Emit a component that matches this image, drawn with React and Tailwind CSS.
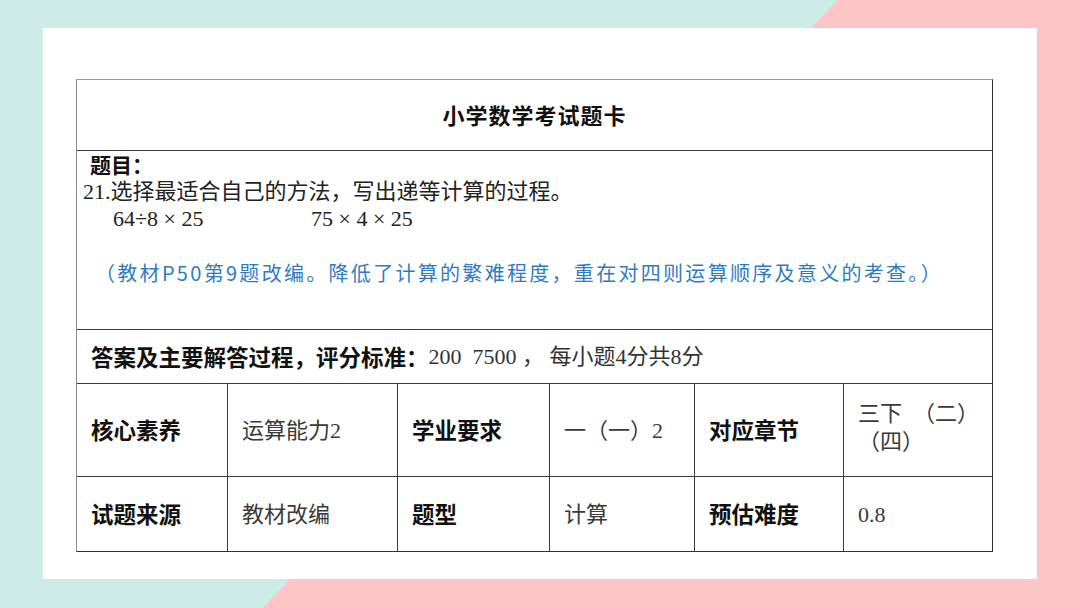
import React from "react";

const serif = "font-['Liberation_Serif','Noto_Sans_CJK_SC',serif]";
const sans = "font-['Noto_Sans_CJK_SC','Liberation_Sans',sans-serif]";

function Label({ children, last }) {
  return (
    <div
      className={`flex items-center pl-[14px] ${sans} font-bold text-[22.5px] text-[#111] ${
        last ? "" : "border-r border-[#3a3a3a]"
      }`}
    >
      {children}
    </div>
  );
}

function Value({ children, last }) {
  return (
    <div
      className={`flex items-center pl-[14px] whitespace-pre ${serif} text-[22px] text-[#3a3a3a] ${
        last ? "" : "border-r border-[#3a3a3a]"
      }`}
    >
      {children}
    </div>
  );
}

export default function App() {
  return (
    <div className="w-[1080px] h-[608px] overflow-hidden bg-[linear-gradient(133.4deg,#cdebe7_50.6%,#fdc6c6_50.6%)] pt-[28px] pl-[43px]">
      <div className="w-[994px] h-[551px] bg-white pt-[51px] pl-[33px]">
        <div className="w-[917px] h-[473px] flex flex-col border-t border-l border-t-[#9a9a9a] border-l-[#8a8a8a] border-r border-b border-[#2f2f2f]">
          {/* 标题 */}
          <div className={`h-[71px] shrink-0 flex items-center justify-center pb-[2px] border-b border-[#3a3a3a] ${sans} font-bold text-[22px] text-[#111] tracking-[1px]`}>
            小学数学考试题卡
          </div>

          {/* 题目 */}
          <div className="h-[179px] shrink-0 border-b border-[#3a3a3a] leading-[27px] text-[22px]">
            <div className={`pl-[13px] ${sans} font-bold text-[21px] text-[#111]`}>题目：</div>
            <div className={`pl-[6px] ${serif} text-[#222]`}>
              21.选择最适合自己的方法，写出递等计算的过程。
            </div>
            <div className={`flex pl-[36px] ${serif} text-[#222]`}>
              <span className="w-[198px]">64÷8 × 25</span>
              <span>75 × 4 × 25</span>
            </div>
            <div className="h-[27px]"></div>
            <div className={`pl-[18px] ${sans} text-[20px] tracking-[2.3px] text-[#2f7bc2]`}>
              （教材P50第9题改编。降低了计算的繁难程度，重在对四则运算顺序及意义的考查。）
            </div>
          </div>

          {/* 答案 */}
          <div className="h-[54px] shrink-0 flex items-center pl-[14px] border-b border-[#3a3a3a] whitespace-pre">
            <span className={`${sans} font-bold text-[22.5px] text-[#111]`}>答案及主要解答过程，评分标准：</span>
            <span className={`${serif} text-[22px] text-[#333]`}>200  7500 ， 每小题4分共8分</span>
          </div>

          {/* 属性 */}
          <div className="h-[93px] shrink-0 grid grid-cols-[151px_170px_152px_145px_149px_148px] border-b border-[#3a3a3a]">
            <Label>核心素养</Label>
            <Value>运算能力2</Value>
            <Label>学业要求</Label>
            <Value>一（一）2</Value>
            <Label>对应章节</Label>
            <div className={`flex flex-col justify-start pt-[16px] pl-[14px] ${serif} text-[22px] leading-[28px] text-[#3a3a3a]`}>
              <span className="whitespace-pre">三下  （二）</span>
              <span>（四）</span>
            </div>
          </div>
          <div className="flex-1 grid grid-cols-[151px_170px_152px_145px_149px_148px]">
            <Label>试题来源</Label>
            <Value>教材改编</Value>
            <Label>题型</Label>
            <Value>计算</Value>
            <Label>预估难度</Label>
            <Value last>0.8</Value>
          </div>
        </div>
      </div>
    </div>
  );
}
